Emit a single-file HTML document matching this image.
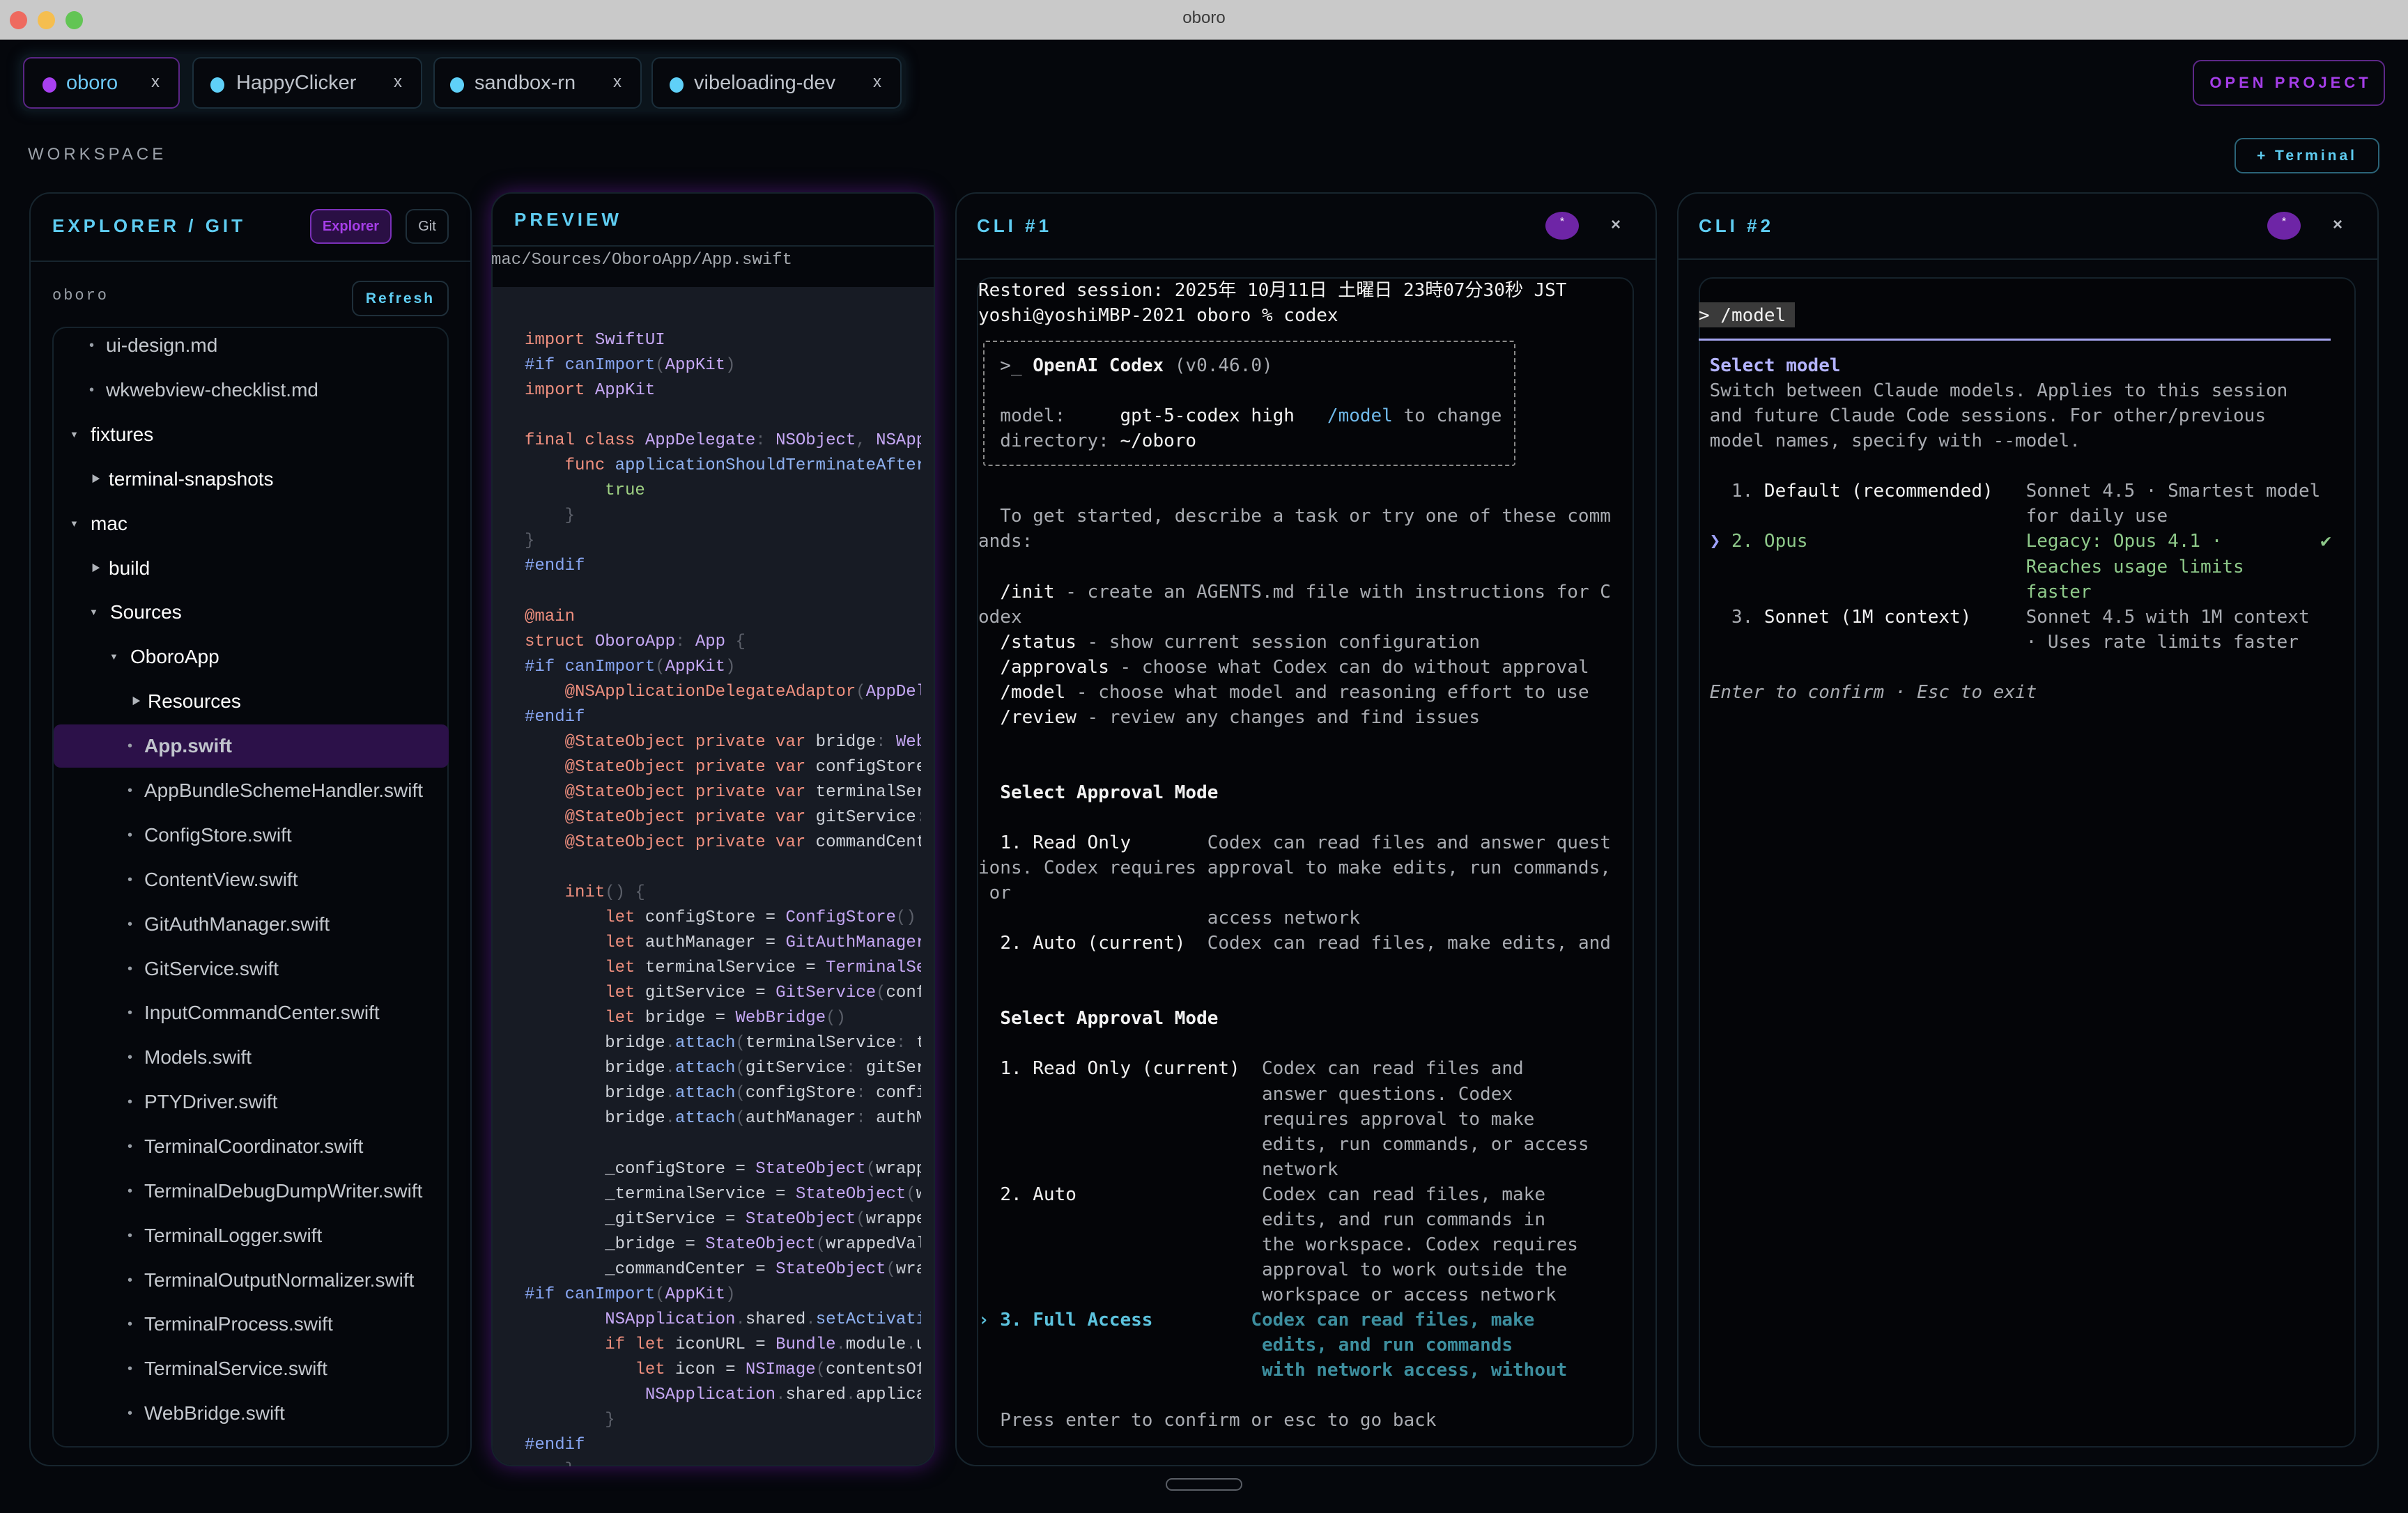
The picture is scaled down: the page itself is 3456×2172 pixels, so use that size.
<!DOCTYPE html>
<html><head><meta charset="utf-8"><style>
*{margin:0;padding:0;box-sizing:border-box}
html,body{width:3456px;height:2172px;overflow:hidden;background:#05070c}
body{position:relative;font-family:"Liberation Sans","Noto Sans CJK JP",sans-serif;color:#d0d4da}
.abs{position:absolute}
.tb{left:0;top:0;width:3456px;height:57px;background:#c9c9c9;border-bottom:1px solid #a8a8a8}
.tl{position:absolute;top:16px;width:25px;height:26px;border-radius:50%}
.tab{position:absolute;top:82px;height:74px;border:2px solid #1b2e3a;border-radius:12px;background:#06080d;font-size:29px;color:#bfc4cc}
.tab .d{position:absolute;top:27px;width:20px;height:22px;border-radius:50%;background:#5fd0f8}
.tab .t{position:absolute;top:19px}
.tab .x{position:absolute;top:20px;font-size:24px;color:#b8bcc4}
.btn{position:absolute;border-radius:12px;font-weight:bold;text-align:center}
.panel{position:absolute;top:276px;height:1829px;border:2px solid #17252e;border-radius:30px;background:#05070c;overflow:hidden}
.ph{position:absolute;font-weight:bold;font-size:26px;letter-spacing:5px;color:#5fcdf2}
.hr{position:absolute;height:2px;background:#17252e}
.tree{position:absolute;left:75px;top:469px;width:569px;height:1609px;border:2px solid #15222b;border-radius:20px}
.ti{position:absolute;font-size:28px;line-height:40px;white-space:nowrap}
.car{position:absolute;font-size:13px;color:#b0b4ba;line-height:40px}
.bul{position:absolute;font-size:20px;color:#9aa0a8;line-height:40px}
pre{font-family:"DejaVu Sans Mono","Noto Sans CJK JP",monospace;white-space:pre;margin:0}
.term{position:absolute;font-size:26px;line-height:36.04px;color:#a9acb2;overflow:hidden}
.w{color:#f2f2f2}.b{font-weight:bold}
.code{position:absolute;left:753px;top:471px;width:569px;height:1634px;overflow:hidden;font-family:"Liberation Mono",monospace;font-size:24px;line-height:36.04px;color:#cfd3da;white-space:pre}
.k{color:#f0907f}.ty{color:#c6a8f5}.pp{color:#88a6f2}.g{color:#9fd183}.p{color:#5c606a}.f{color:#8fb2f2}
</style></head><body>
<div class="abs tb"></div>
<div class="tl" style="left:14px;background:#ee6a5f"></div>
<div class="tl" style="left:54px;background:#f5be4f"></div>
<div class="tl" style="left:94px;background:#62c554"></div>
<div class="abs" style="left:0;width:3456px;top:12px;text-align:center;font-size:24px;color:#3a3a3a">oboro</div>

<div class="abs" style="left:28px;top:78px;width:1272px;height:82px;background:#0b141b;border-radius:14px;box-shadow:0 0 18px rgba(40,80,100,.35)"></div>
<div class="tab" style="left:33px;width:225px;border-color:#5a2585"><span class="d" style="left:26px;background:#a840f0"></span><span class="t" style="left:60px;color:#6cc8f5">oboro</span><span class="x" style="left:182px">x</span></div>
<div class="tab" style="left:276px;width:330px"><span class="d" style="left:24px"></span><span class="t" style="left:61px">HappyClicker</span><span class="x" style="left:287px">x</span></div>
<div class="tab" style="left:622px;width:299px"><span class="d" style="left:22px"></span><span class="t" style="left:57px">sandbox-rn</span><span class="x" style="left:256px">x</span></div>
<div class="tab" style="left:935px;width:359px"><span class="d" style="left:24px"></span><span class="t" style="left:59px">vibeloading-dev</span><span class="x" style="left:316px">x</span></div>

<div class="btn" style="left:3147px;top:86px;width:276px;height:66px;border:2px solid #5d2788;color:#a53ee8;font-size:22px;letter-spacing:5px;line-height:62px;padding-left:5px">OPEN PROJECT</div>
<div class="abs" style="left:40px;top:208px;font-size:24px;letter-spacing:5px;color:#9ca2aa">WORKSPACE</div>
<div class="btn" style="left:3207px;top:198px;width:208px;height:51px;border:2px solid #2b6478;color:#5fcdf2;font-size:21px;letter-spacing:4px;line-height:47px">+ Terminal</div>

<!-- Explorer -->
<div class="panel" style="left:42px;width:635px"></div>
<div class="ph" style="left:75px;top:309px">EXPLORER / GIT</div>
<div class="btn" style="left:445px;top:300px;width:117px;height:50px;border:2px solid #7a30b8;background:#2a0f44;color:#a53ee8;font-size:20px;line-height:46px">Explorer</div>
<div class="btn" style="left:582px;top:300px;width:62px;height:50px;border:2px solid #1f2f3a;color:#b8bcc4;font-size:20px;line-height:46px;font-weight:normal">Git</div>
<div class="hr" style="left:44px;top:374px;width:631px"></div>
<div class="abs" style="left:75px;top:412px;font-size:22px;letter-spacing:3px;color:#9aa0a8;font-family:'Liberation Mono',monospace">oboro</div>
<div class="btn" style="left:505px;top:403px;width:139px;height:51px;border:2px solid #1f2f3a;color:#5fcdf2;font-size:21px;letter-spacing:3px;line-height:47px">Refresh</div>
<div class="tree"></div>
<div class="abs" style="left:77px;top:1040px;width:567px;height:62px;background:#2c1149;border-radius:10px"></div>

<span class="bul" style="left:128px;top:476px">•</span><span class="ti" style="left:152px;top:476px;color:#c4c8ce">ui-design.md</span>
<span class="bul" style="left:128px;top:540px">•</span><span class="ti" style="left:152px;top:540px;color:#c4c8ce">wkwebview-checklist.md</span>
<span class="car" style="left:100px;top:604px">▼</span><span class="ti" style="left:130px;top:604px;color:#fff">fixtures</span>
<span class="car" style="left:131px;top:668px">▶</span><span class="ti" style="left:156px;top:668px;color:#fff">terminal-snapshots</span>
<span class="car" style="left:100px;top:732px">▼</span><span class="ti" style="left:130px;top:732px;color:#fff">mac</span>
<span class="car" style="left:131px;top:796px">▶</span><span class="ti" style="left:156px;top:796px;color:#fff">build</span>
<span class="car" style="left:128px;top:859px">▼</span><span class="ti" style="left:158px;top:859px;color:#fff">Sources</span>
<span class="car" style="left:157px;top:923px">▼</span><span class="ti" style="left:187px;top:923px;color:#fff">OboroApp</span>
<span class="car" style="left:189px;top:987px">▶</span><span class="ti" style="left:212px;top:987px;color:#fff">Resources</span>
<span class="bul" style="left:183px;top:1051px">•</span><span class="ti" style="left:207px;top:1051px;color:#c0c4cc;font-weight:bold">App.swift</span>
<span class="bul" style="left:183px;top:1115px">•</span><span class="ti" style="left:207px;top:1115px;color:#c4c8ce">AppBundleSchemeHandler.swift</span>
<span class="bul" style="left:183px;top:1179px">•</span><span class="ti" style="left:207px;top:1179px;color:#c4c8ce">ConfigStore.swift</span>
<span class="bul" style="left:183px;top:1243px">•</span><span class="ti" style="left:207px;top:1243px;color:#c4c8ce">ContentView.swift</span>
<span class="bul" style="left:183px;top:1307px">•</span><span class="ti" style="left:207px;top:1307px;color:#c4c8ce">GitAuthManager.swift</span>
<span class="bul" style="left:183px;top:1371px">•</span><span class="ti" style="left:207px;top:1371px;color:#c4c8ce">GitService.swift</span>
<span class="bul" style="left:183px;top:1434px">•</span><span class="ti" style="left:207px;top:1434px;color:#c4c8ce">InputCommandCenter.swift</span>
<span class="bul" style="left:183px;top:1498px">•</span><span class="ti" style="left:207px;top:1498px;color:#c4c8ce">Models.swift</span>
<span class="bul" style="left:183px;top:1562px">•</span><span class="ti" style="left:207px;top:1562px;color:#c4c8ce">PTYDriver.swift</span>
<span class="bul" style="left:183px;top:1626px">•</span><span class="ti" style="left:207px;top:1626px;color:#c4c8ce">TerminalCoordinator.swift</span>
<span class="bul" style="left:183px;top:1690px">•</span><span class="ti" style="left:207px;top:1690px;color:#c4c8ce">TerminalDebugDumpWriter.swift</span>
<span class="bul" style="left:183px;top:1754px">•</span><span class="ti" style="left:207px;top:1754px;color:#c4c8ce">TerminalLogger.swift</span>
<span class="bul" style="left:183px;top:1818px">•</span><span class="ti" style="left:207px;top:1818px;color:#c4c8ce">TerminalOutputNormalizer.swift</span>
<span class="bul" style="left:183px;top:1881px">•</span><span class="ti" style="left:207px;top:1881px;color:#c4c8ce">TerminalProcess.swift</span>
<span class="bul" style="left:183px;top:1945px">•</span><span class="ti" style="left:207px;top:1945px;color:#c4c8ce">TerminalService.swift</span>
<span class="bul" style="left:183px;top:2009px">•</span><span class="ti" style="left:207px;top:2009px;color:#c4c8ce">WebBridge.swift</span>

<!-- Preview -->
<div class="panel" style="left:705px;width:637px;box-shadow:0 0 30px rgba(110,30,170,.55);border-color:#15222b"></div>
<div class="abs" style="left:707px;top:412px;width:633px;height:1691px;background:#171b24;border-radius:0 0 28px 28px"></div>
<div class="ph" style="left:738px;top:300px">PREVIEW</div>
<div class="hr" style="left:707px;top:352px;width:633px"></div>
<div class="abs" style="left:705px;top:360px;font-family:'Liberation Mono',monospace;font-size:24px;color:#a4a8ae">mac/Sources/OboroApp/App.swift</div>
<div class="code"><span class="k">import</span> <span class="ty">SwiftUI</span>
<span class="pp">#if canImport</span><span class="p">(</span><span class="ty">AppKit</span><span class="p">)</span>
<span class="k">import</span> <span class="ty">AppKit</span>

<span class="k">final class</span> <span class="ty">AppDelegate</span><span class="p">:</span> <span class="ty">NSObject</span><span class="p">,</span> <span class="ty">NSApplicationDelegate</span>
    <span class="k">func</span> <span class="f">applicationShouldTerminateAfterLastWindowClosed</span>
        <span class="g">true</span>
    <span class="p">}</span>
<span class="p">}</span>
<span class="pp">#endif</span>

<span class="k">@main</span>
<span class="k">struct</span> <span class="ty">OboroApp</span><span class="p">:</span> <span class="ty">App</span> <span class="p">{</span>
<span class="pp">#if canImport</span><span class="p">(</span><span class="ty">AppKit</span><span class="p">)</span>
    <span class="k">@NSApplicationDelegateAdaptor</span><span class="p">(</span><span class="ty">AppDelegate</span>
<span class="pp">#endif</span>
    <span class="k">@StateObject private var</span> bridge<span class="p">:</span> <span class="ty">WebBridge</span>
    <span class="k">@StateObject private var</span> configStore<span class="p">:</span>
    <span class="k">@StateObject private var</span> terminalService
    <span class="k">@StateObject private var</span> gitService<span class="p">:</span>
    <span class="k">@StateObject private var</span> commandCenter

    <span class="k">init</span><span class="p">() {</span>
        <span class="k">let</span> configStore = <span class="ty">ConfigStore</span><span class="p">()</span>
        <span class="k">let</span> authManager = <span class="ty">GitAuthManager</span><span class="p">()</span>
        <span class="k">let</span> terminalService = <span class="ty">TerminalService</span>
        <span class="k">let</span> gitService = <span class="ty">GitService</span><span class="p">(</span>configStore
        <span class="k">let</span> bridge = <span class="ty">WebBridge</span><span class="p">()</span>
        bridge<span class="p">.</span><span class="f">attach</span><span class="p">(</span>terminalService<span class="p">:</span> terminal
        bridge<span class="p">.</span><span class="f">attach</span><span class="p">(</span>gitService<span class="p">:</span> gitService
        bridge<span class="p">.</span><span class="f">attach</span><span class="p">(</span>configStore<span class="p">:</span> configStore
        bridge<span class="p">.</span><span class="f">attach</span><span class="p">(</span>authManager<span class="p">:</span> authManager

        _configStore = <span class="ty">StateObject</span><span class="p">(</span>wrappedValue
        _terminalService = <span class="ty">StateObject</span><span class="p">(</span>wrapped
        _gitService = <span class="ty">StateObject</span><span class="p">(</span>wrappedValue
        _bridge = <span class="ty">StateObject</span><span class="p">(</span>wrappedValue
        _commandCenter = <span class="ty">StateObject</span><span class="p">(</span>wrapped
<span class="pp">#if canImport</span><span class="p">(</span><span class="ty">AppKit</span><span class="p">)</span>
        <span class="ty">NSApplication</span><span class="p">.</span>shared<span class="p">.</span><span class="f">setActivationPolicy</span>
        <span class="k">if let</span> iconURL = <span class="ty">Bundle</span><span class="p">.</span>module<span class="p">.</span>url
           <span class="k">let</span> icon = <span class="ty">NSImage</span><span class="p">(</span>contentsOf
            <span class="ty">NSApplication</span><span class="p">.</span>shared<span class="p">.</span>applicationIcon
        <span class="p">}</span>
<span class="pp">#endif</span>
    <span class="p">}</span></div>

<!-- CLI 1 -->
<div class="panel" style="left:1371px;width:1007px"></div>
<div class="ph" style="left:1402px;top:309px">CLI #1</div>
<div class="abs" style="left:2218px;top:304px;width:48px;height:40px;border-radius:50%;background:#6e25a6;color:#fff;text-align:center;font-size:16px;line-height:30px">*</div>
<div class="abs" style="left:2312px;top:309px;font-size:24px;color:#b8bcc4;font-weight:bold">×</div>
<div class="hr" style="left:1373px;top:371px;width:1003px"></div>
<div class="abs" style="left:1402px;top:398px;width:943px;height:1680px;border:2px solid #15222b;border-radius:20px;background:#040508"></div>
<div class="abs" style="left:1411px;top:489px;width:764px;height:180px;border:2px dashed #8a8a8a;border-radius:4px"></div>
<pre class="term" style="left:1404px;top:399px;width:940px;height:1675px"><span class="w">Restored session: 2025年 10月11日 土曜日 23時07分30秒 JST</span>
<span class="w">yoshi@yoshiMBP-2021 oboro % codex</span>

  &gt;_ <span class="w b">OpenAI Codex</span> (v0.46.0)

  model:     <span class="w">gpt-5-codex high</span>   <span style="color:#6fb8e8">/model</span> to change
  directory: <span class="w">~/oboro</span>


  To get started, describe a task or try one of these comm
ands:

  <span class="w">/init</span> - create an AGENTS.md file with instructions for C
odex
  <span class="w">/status</span> - show current session configuration
  <span class="w">/approvals</span> - choose what Codex can do without approval
  <span class="w">/model</span> - choose what model and reasoning effort to use
  <span class="w">/review</span> - review any changes and find issues


  <span class="w b">Select Approval Mode</span>

  <span class="w">1. Read Only</span>       Codex can read files and answer quest
ions. Codex requires approval to make edits, run commands,
 or
                     access network
  <span class="w">2. Auto (current)</span>  Codex can read files, make edits, and


  <span class="w b">Select Approval Mode</span>

  <span class="w">1. Read Only (current)</span>  Codex can read files and
                          answer questions. Codex
                          requires approval to make
                          edits, run commands, or access
                          network
  <span class="w">2. Auto</span>                 Codex can read files, make
                          edits, and run commands in
                          the workspace. Codex requires
                          approval to work outside the
                          workspace or access network
<span class="b" style="color:#5cc3de">› 3. Full Access</span>         <span class="b" style="color:#3d8e9e">Codex can read files, make</span>
                          <span class="b" style="color:#3d8e9e">edits, and run commands</span>
                          <span class="b" style="color:#3d8e9e">with network access, without</span>

  Press enter to confirm or esc to go back</pre>

<!-- CLI 2 -->
<div class="panel" style="left:2407px;width:1007px"></div>
<div class="ph" style="left:2438px;top:309px">CLI #2</div>
<div class="abs" style="left:3254px;top:304px;width:48px;height:40px;border-radius:50%;background:#6e25a6;color:#fff;text-align:center;font-size:16px;line-height:30px">*</div>
<div class="abs" style="left:3348px;top:309px;font-size:24px;color:#b8bcc4;font-weight:bold">×</div>
<div class="hr" style="left:2409px;top:371px;width:1003px"></div>
<div class="abs" style="left:2438px;top:398px;width:943px;height:1680px;border:2px solid #15222b;border-radius:20px;background:#040508"></div>
<div class="abs" style="left:2438px;top:434px;width:138px;height:36px;background:#3a3a3a"></div>
<div class="abs" style="left:2438px;top:486px;width:907px;height:3px;background:#a6a6f0"></div>
<pre class="term" style="left:2438px;top:399px;width:940px;height:1675px">

<span class="w">&gt; /model</span>

 <span class="b" style="color:#b4b4ff">Select model</span>
 Switch between Claude models. Applies to this session
 and future Claude Code sessions. For other/previous
 model names, specify with --model.

   1. <span class="w">Default (recommended)</span>   Sonnet 4.5 · Smartest model
                              for daily use
<span style="color:#8ec98a"> <span style="color:#9fa3ff">❯</span> 2. Opus                    Legacy: Opus 4.1 ·         ✔</span>
<span style="color:#8ec98a">                              Reaches usage limits</span>
<span style="color:#8ec98a">                              faster</span>
   3. <span class="w">Sonnet (1M context)</span>     Sonnet 4.5 with 1M context
                              · Uses rate limits faster

 <i>Enter to confirm · Esc to exit</i></pre>

<div class="abs" style="left:1673px;top:2122px;width:110px;height:18px;border:2px solid #5a5e66;border-radius:9px"></div>
</body></html>
